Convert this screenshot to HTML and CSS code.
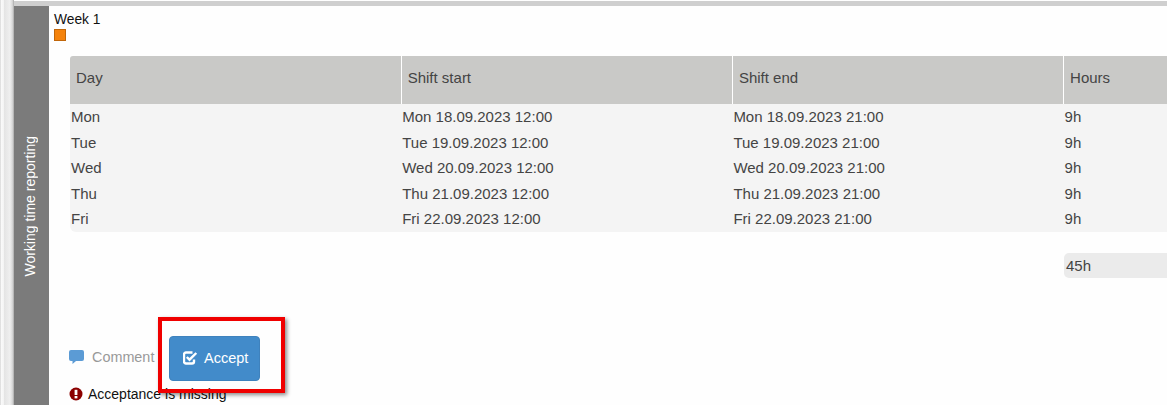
FILE: index.html
```html
<!DOCTYPE html>
<html lang="en">
<head>
    <meta charset="UTF-8">
    <title>Working time reporting</title>
    <link rel="stylesheet" href="styles.css">
</head>
<body>
    <div class="page">
        <div class="strip"></div>
        <div class="content">
            <div class="topbar"></div>
            <div class="body-row">
                <div class="side"><span>Working time reporting</span></div>
                <div class="main">
                    <div class="week">Week 1</div>
                    <div class="marker"></div>
                    <table class="shifts">
                        <thead>
                            <tr><th class="col">Day</th><th class="col">Shift start</th><th class="col">Shift end</th><th>Hours</th></tr>
                        </thead>
                        <tbody>
                            <tr><td>Mon</td><td>Mon 18.09.2023 12:00</td><td>Mon 18.09.2023 21:00</td><td>9h</td></tr>
                            <tr><td>Tue</td><td>Tue 19.09.2023 12:00</td><td>Tue 19.09.2023 21:00</td><td>9h</td></tr>
                            <tr><td>Wed</td><td>Wed 20.09.2023 12:00</td><td>Wed 20.09.2023 21:00</td><td>9h</td></tr>
                            <tr><td>Thu</td><td>Thu 21.09.2023 12:00</td><td>Thu 21.09.2023 21:00</td><td>9h</td></tr>
                            <tr class="last"><td>Fri</td><td>Fri 22.09.2023 12:00</td><td>Fri 22.09.2023 21:00</td><td>9h</td></tr>
                        </tbody>
                    </table>
                    <div class="total-row"><div class="total">45h</div></div>
                    <div class="actions">
                        <span class="comment">
                            <svg width="15" height="14" viewBox="0 0 15 14"><path class="bubble" d="M2 0h11a2 2 0 0 1 2 2v7a2 2 0 0 1-2 2H7l-3.500 3V11H2a2 2 0 0 1-2-2V2a2 2 0 0 1 2-2z"/></svg>
                            Comment
                        </span>
                        <button class="accept">
                            <svg width="15" height="14" viewBox="0 0 15 14"><path class="check-box" d="M11 8.500v2A2 2 0 0 1 9 12.500H3a2 2 0 0 1-2-2v-7a2 2 0 0 1 2-2h6.500"/><path class="check-box" d="M3.800 6l2.700 2.700L13.300 2"/></svg>
                            Accept
                        </button>
                    </div>
                    <div class="missing">
                        <svg width="14" height="14" viewBox="0 0 14 14"><circle cx="7" cy="7" r="6.500" fill="#8b0000"/><rect x="5.600" y="2.800" width="2.800" height="5.200" fill="#fff"/><rect x="5.600" y="9" width="2.800" height="2.400" fill="#fff"/></svg>
                        Acceptance is missing
                    </div>
                    <div class="highlight"></div>
                </div>
            </div>
        </div>
    </div>
</body>
</html>
```

FILE: styles.css
```css
* {
    margin: 0;
    padding: 0;
    box-sizing: border-box;
}

html, body {
    height: 100%;
    overflow: hidden;
    background: #fff;
}

body {
    font-family: "Liberation Sans", Arial, sans-serif;
    font-size: 15px;
    color: #444;
}

.page {
    display: flex;
    height: 405px;
    overflow: hidden;
}

.strip {
    width: 14px;
    flex-shrink: 0;
    background: linear-gradient(to right, #ccc 0, #fafafa 8%, #f4f4f4 25%, #e4e4e4 30%, #efefef 70%, #d8d8d8 88%, #a8a8a8 100%);
}

.content {
    flex: 1;
    min-width: 0;
    display: flex;
    flex-direction: column;
}

/* 顶部灰条横跨侧栏和内容 */
.topbar {
    height: 6px;
    border-top: 1px solid #fff;
    background: #cfcfcf;
}

.body-row {
    flex: 1;
    display: flex;
    min-height: 0;
}

.side {
    width: 35px;
    flex-shrink: 0;
    background: #7b7b7b;
    display: flex;
    align-items: center;
    justify-content: center;
}

.side span {
    writing-mode: vertical-rl;
    transform: rotate(180deg);
    color: #fff;
    font-size: 14px;
    margin-top: 2px;
    margin-right: 3px;
    white-space: nowrap;
}

.main {
    position: relative;
    flex: 1;
    min-width: 0;
    background: #fefefe;
    padding-top: 6px;
}

.week {
    margin-left: 5px;
    font-size: 13.800px;
    line-height: 15px;
    color: #111;
}

.marker {
    width: 12px;
    height: 12px;
    margin: 2px 0 0 5px;
    background: #f5830c;
    border: 1px solid #c0660a;
}

.shifts {
    margin: 15px 0 0 21px;
    width: 1200px;
    border-collapse: collapse;
    table-layout: fixed;
}

.shifts th {
    height: 48px;
    background: #c9c9c7;
    font-weight: normal;
    text-align: left;
    padding-left: 6px;
    padding-bottom: 6px;
    border-left: 1px solid #fff;
}

.shifts th:first-child {
    border-left: none;
    border-top-left-radius: 3px;
}

.col {
    width: 331.200px;
}

.shifts td {
    height: 25.600px;
    background: #f4f4f4;
    padding-left: 1px;
}

.shifts .last td {
    padding-bottom: 2px;
}

.shifts .last td:first-child {
    border-bottom-left-radius: 6px;
}

.total-row {
    margin: 21px 0 0 1015px;
}

.total {
    height: 25px;
    line-height: 25px;
    padding-left: 2px;
    background: #ebebeb;
    border-radius: 5px 0 0 5px;
}

.actions {
    display: flex;
    align-items: center;
    margin: 58px 0 0 20px;
}

.comment {
    display: flex;
    align-items: center;
    gap: 8px;
    width: 100px;
    font-size: 14.400px;
    color: #999;
    margin-top: -2px;
}

.bubble {
    fill: #5b9bd5;
}

.accept {
    display: flex;
    align-items: center;
    gap: 6px;
    width: 91px;
    height: 45px;
    padding-left: 13px;
    background: #428bca;
    color: #fff;
    font-family: inherit;
    font-size: 14.500px;
    border: 1px solid #3f82bd;
    border-radius: 4px;
}

.check-box {
    fill: none;
    stroke: #fff;
    stroke-width: 2.400;
}

.missing {
    display: flex;
    align-items: center;
    gap: 5px;
    margin: 5px 0 0 20px;
    font-size: 14px;
    line-height: 16px;
    color: #111;
}

.highlight {
    position: absolute;
    left: 109px;
    top: 311px;
    width: 127px;
    height: 76px;
    border: 4px solid #f00000;
    box-shadow: 2px 2px 4px rgba(0, 0, 0, 0.45);
}
```
